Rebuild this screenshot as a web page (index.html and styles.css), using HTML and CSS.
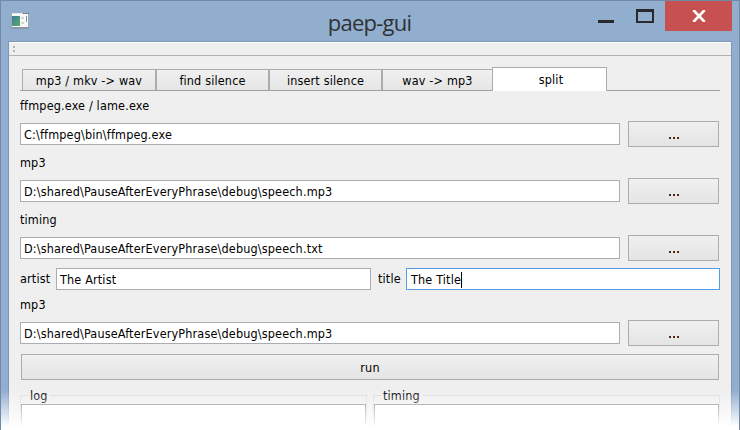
FILE: index.html
```html
<!DOCTYPE html>
<html lang="en">
<head>
<meta charset="utf-8">
<title>paep-gui</title>
<link rel="stylesheet" href="styles.css">
</head>
<body>
<div class="window">
  <header class="titlebar">
    <svg class="app-icon" width="20" height="17" viewBox="0 0 20 17">
      <defs><linearGradient id="g" x1="0" y1="0" x2="1" y2="1"><stop offset="0" stop-color="#397b9e"/><stop offset="1" stop-color="#5bad69"/></linearGradient></defs>
      <path d="M1.500 .5h17v14h-17z" fill="#f8f8f8" stroke="#a3a8ad"/>
      <path d="M2 .5h11" stroke="#e4e8ed"/>
      <path d="M1 15h18" stroke="#788490"/>
      <path d="M13 .5h1.300M15.500 .5h1.300M17.800 .5h1.200" stroke="#586879"/>
      <path d="M2 3h8v10H2z" fill="url(#g)"/>
      <path d="M11 4h3v2h-3zM11 9h3v2h-3z" fill="#d1d3d5"/>
      <path d="M16.500 3v6" stroke="#6e9caa"/>
    </svg>
    <h1 class="title">paep-gui</h1>
    <div class="controls">
      <svg width="59" height="30" viewBox="0 0 59 30">
        <path d="M0 19h16v3H0z" fill="#292929"/>
        <path d="M38 8h18v14H38zM40 11v9h14v-9z" fill="#292929" fill-rule="evenodd"/>
      </svg>
      <div class="close"><svg width="14" height="12" viewBox="0 0 14 12"><path d="M1.300 0L12.700 12M12.700 0L1.300 12" stroke="#fff" stroke-width="2.600"/></svg></div>
    </div>
  </header>
  <main class="client">
    <div class="toolbar"><i></i><i></i></div>
    <nav class="tabs">
      <div class="tab t1"><span>mp3 / mkv -&gt; wav</span></div>
      <div class="tab t2"><span>find silence</span></div>
      <div class="tab t3"><span>insert silence</span></div>
      <div class="tab t4"><span>wav -&gt; mp3</span></div>
      <div class="tab active"><span>split</span></div>
    </nav>
    <div class="label first">ffmpeg.exe / lame.exe</div>
    <div class="row"><div class="field">C:\ffmpeg\bin\ffmpeg.exe</div><div class="button browse"><i></i><i></i><i></i></div></div>
    <div class="label">mp3</div>
    <div class="row"><div class="field">D:\shared\PauseAfterEveryPhrase\debug\speech.mp3</div><div class="button browse"><i></i><i></i><i></i></div></div>
    <div class="label">timing</div>
    <div class="row"><div class="field">D:\shared\PauseAfterEveryPhrase\debug\speech.txt</div><div class="button browse"><i></i><i></i><i></i></div></div>
    <div class="meta">
      <div class="meta-label">artist</div><div class="field">The Artist</div>
      <div class="meta-label name">title</div><div class="field focus">The Title<span class="caret"></span></div>
    </div>
    <div class="label last">mp3</div>
    <div class="row"><div class="field">D:\shared\PauseAfterEveryPhrase\debug\speech.mp3</div><div class="button browse"><i></i><i></i><i></i></div></div>
    <div class="button run">run</div>
    <div class="groups">
      <div class="group"><div class="legend"><span>log</span></div><div class="output"></div></div>
      <div class="group"><div class="legend"><span>timing</span></div><div class="output"></div></div>
    </div>
  </main>
  <div class="fade"></div>
</div>
</body>
</html>
```
FILE: styles.css
```css
* { box-sizing: border-box; }
body { margin: 0; background: #fff; overflow: hidden; }
.window {
  position: relative;
  width: 740px;
  height: 430px;
  overflow: hidden;
  display: flex;
  flex-direction: column;
  padding: 0 7px;
  background: #91aecf;
  border: 1px solid #6f89a7;
  border-bottom: 0;
  font: 12.5px/16px "DejaVu Sans Condensed", "DejaVu Sans", sans-serif;
  font-stretch: condensed;
  letter-spacing: 0.165px;
  color: #000;
}
.titlebar { display: grid; grid-template-columns: 160px 1fr 160px; height: 40px; flex: none; }
.app-icon { margin: 12px 0 0 2px; }
.title {
  margin: 6px 0 0 -1px;
  text-align: center;
  font: 400 22px/30px "Open Sans", sans-serif;
  letter-spacing: -0.75px;
  color: #2f3235;
}
.controls { display: flex; justify-content: flex-end; height: 30px; }
.close { width: 67px; margin-left: 8px; background: #c75050; display: flex; justify-content: center; padding-top: 9px; }
.client {
  flex: 1;
  padding: 0 11px;
  background: #efefef;
  border: 1px solid #7f99b5;
  border-bottom: 0;
  box-shadow: inset 0 1px #fff;
}
.toolbar {
  height: 14px;
  margin: 0 -11px;
  padding: 4px 0 0 4px;
  border-bottom: 1px solid #b2b2b2;
}
.toolbar i { display: block; width: 2px; height: 2px; margin-bottom: 2px; background: #b5b5b5; }
.tabs { display: flex; align-items: flex-end; height: 35px; width: 700px; padding-left: 2px; border-bottom: 1px solid #a0a0a0; }
.tab {
  height: 21px;
  padding-top: 3px;
  text-align: center;
  white-space: nowrap;
  background: linear-gradient(#f0f0f0, #e5e5e5);
  border: 1px solid #acacac;
  border-bottom: 0;
}
.t1 { width: 134px; }
.t2 { width: 113px; }
.t3 { width: 113px; }
.t4 { width: 110px; border-right: 0; }
.tab.active { width: 115px; height: 24px; margin-bottom: -1px; padding: 4px 0 0 3px; background: #fff; }
.label { height: 31px; padding-top: 8px; }
.label.first { height: 30px; padding-top: 7px; }
.label.last { height: 30px; padding-top: 7px; }
.row { display: flex; align-items: center; gap: 8px; height: 26px; width: 699px; }
.field {
  flex: 1;
  height: 22px;
  padding: 3px 3px 0;
  white-space: nowrap;
  background: #fff;
  border: 1px solid #abadb3;
}
.field.focus { border-color: #569de5; padding-left: 4px; }
.caret { display: inline-block; width: 1px; height: 16px; vertical-align: top; background: #000; }
.button { border: 1px solid #acacac; background: linear-gradient(#f0f0f0, #e4e4e4); }
.browse { width: 91px; height: 26px; display: flex; justify-content: center; gap: 2px; padding-top: 15px; }
.browse i { width: 2px; height: 2px; background: linear-gradient(90deg, #75300c 50%, #28201d 50%); }
.meta { display: grid; grid-template-columns: 36px 315px 35px 314px; width: 700px; margin-top: 7px; }
.meta-label { padding-top: 3px; }
.name { padding-left: 7px; }
.run { width: 698px; height: 26px; margin: 8px 0 0 1px; text-align: center; padding-top: 5px; }
.groups { display: grid; grid-template-columns: 347px 347px; gap: 6px; margin-top: 15px; }
.group { height: 50px; border: 1px solid #dcdcdc; }
.legend { position: relative; z-index: 1; height: 8px; padding-left: 7px; }
.legend span { display: block; width: max-content; height: 8px; padding: 0 2px; background: #efefef; transform: translateY(-8px); }
.output { height: 50px; background: #fff; border: 1px solid #828790; }
.fade { position: absolute; z-index: 2; left: -1px; right: -1px; top: 389px; bottom: 0; background: linear-gradient(rgba(255,255,255,0), #fff 37px); }
```
